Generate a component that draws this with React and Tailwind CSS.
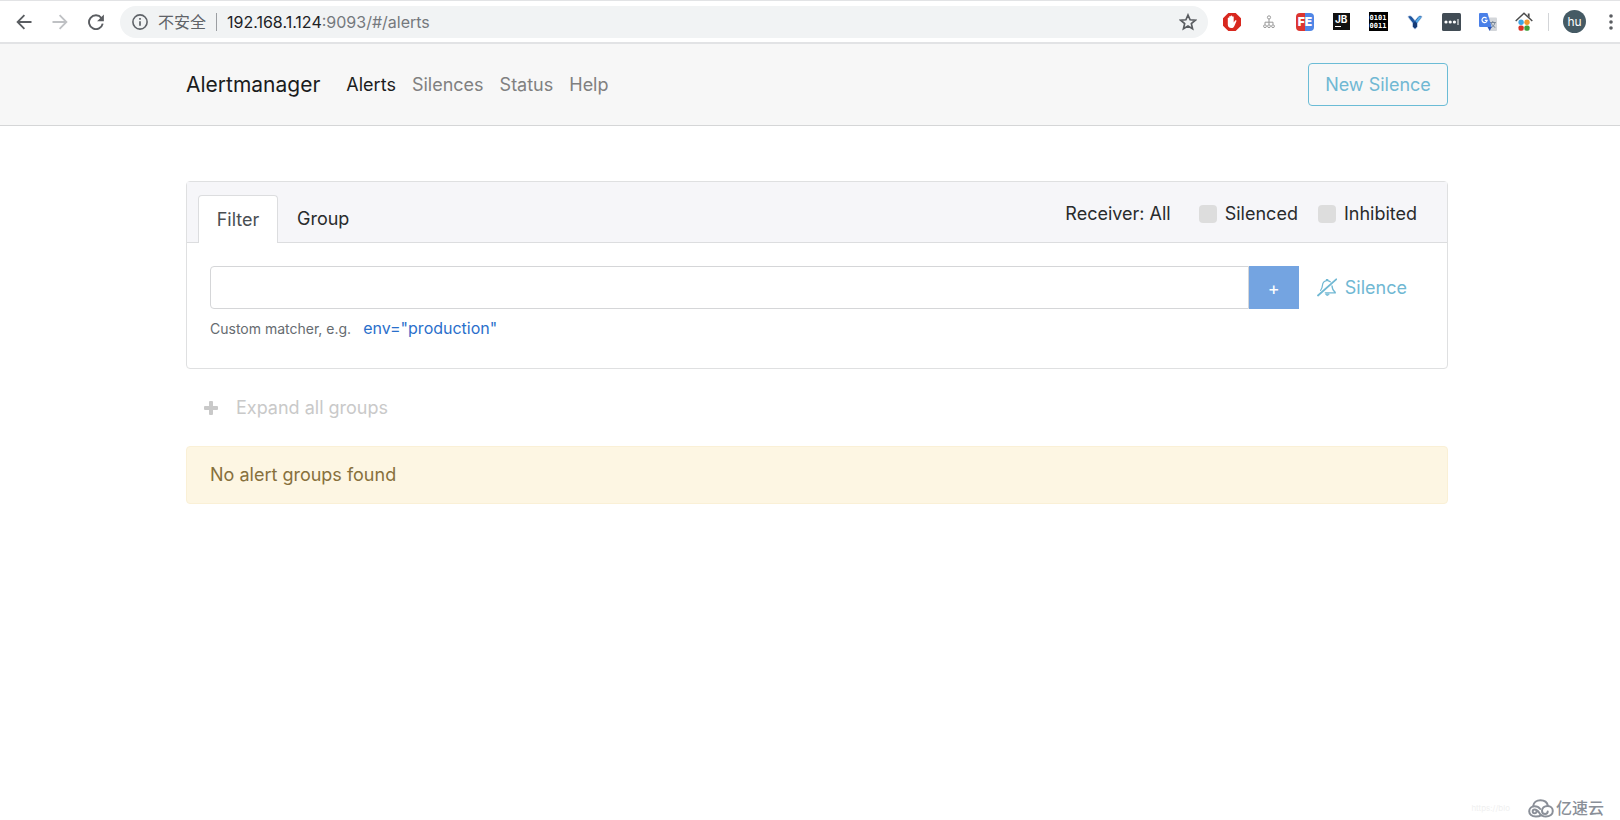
import React from "react";

const svgBase = { xmlns: "http://www.w3.org/2000/svg", "aria-hidden": true };

function ToolButton({ label, children }) {
  return (
    <button type="button" aria-label={label} className="flex h-6 w-6 shrink-0 items-center justify-center">
      {children}
    </button>
  );
}

function BackIcon({ className }) {
  return (
    <svg {...svgBase} viewBox="0 0 16 16" className={className} fill="none" stroke="currentColor" strokeWidth="1.8">
      <path d="M15.5 8H1.8M8.4 1.2 1.6 8l6.8 6.8" />
    </svg>
  );
}

function ReloadIcon() {
  return (
    <svg {...svgBase} viewBox="0 0 16 16" className="h-4 w-4 text-[#5a5d61]" fill="none">
      <path d="M13.4 4A6.9 6.9 0 1 0 14.7 9.6" stroke="currentColor" strokeWidth="1.9" />
      <path d="M15.9.4v6.8H9.1z" fill="currentColor" />
    </svg>
  );
}

function InfoIcon() {
  return (
    <svg {...svgBase} viewBox="0 0 16 16" className="h-4 w-4 shrink-0 text-[#5f6368]" fill="none">
      <circle cx="8" cy="8" r="7.1" stroke="currentColor" strokeWidth="1.6" />
      <path d="M8 7.2v4.5M8 4v1.8" stroke="currentColor" strokeWidth="1.7" />
    </svg>
  );
}

function StarIcon() {
  return (
    <svg {...svgBase} viewBox="0 0 18 18" className="h-[18px] w-[18px] text-[#5a5d61]" fill="none">
      <path
        d="m9 2 2.1 4.8 5.2.45-3.95 3.4 1.2 5.1L9 13.05l-4.55 2.7 1.2-5.1-3.95-3.4 5.2-.45z"
        stroke="currentColor"
        strokeWidth="1.7"
      />
    </svg>
  );
}

function BlockerIcon() {
  return (
    <svg {...svgBase} viewBox="0 0 18 18" className="h-[18px] w-[18px]">
      <path d="M5.3 0h7.4L18 5.3v7.4L12.7 18H5.3L0 12.7V5.3z" fill="#d8281f" />
      <path
        d="M4.800 9.500V5.100c0-.9 1.4-.9 1.4 0V3.700c0-.9 1.5-.9 1.5 0v-.6c0-.9 1.500-.9 1.500 0v.8c0-.9 1.500-.9 1.500 0v5.500l1.200-1.700c.7-.8 1.900-.4 1.500.6l-1.800 4.200c-.6 1.700-1.600 2.600-3.300 2.600-2.300 0-3.500-1.500-3.500-3.600z"
        fill="#fff"
      />
    </svg>
  );
}

function SitemapIcon() {
  return (
    <svg {...svgBase} viewBox="0 0 12 14" className="h-[14px] w-3" fill="none" stroke="#999999">
      <circle cx="6" cy="2.4" r="1.6" />
      <path d="M6 4v5.500M2 9.500V7.200h8v2.300" />
      <circle cx="2" cy="11.2" r="1.4" />
      <circle cx="6" cy="11.2" r="1.4" />
      <circle cx="10" cy="11.2" r="1.4" />
    </svg>
  );
}

function FeIcon() {
  return (
    <span className="flex h-[18px] w-[18px] items-center justify-center rounded-sm bg-linear-to-r from-[#dc3530] from-50% to-[#4f86e6] to-50% text-[12px] leading-none font-black text-white">
      FE
    </span>
  );
}

function JbIcon() {
  return (
    <span className="flex h-[17px] w-[17px] flex-col items-start gap-0.5 bg-[#111] px-0.5 pt-0.5 text-[10px] leading-[9px] font-bold text-white">
      JB
      <span className="h-px w-1.5 bg-white" />
    </span>
  );
}

function BinaryIcon() {
  return (
    <span className="flex h-[19px] w-[19px] flex-col items-center justify-center bg-black font-['DejaVu_Sans_Mono',monospace] text-[7px] leading-[8px] font-bold text-white">
      <span>0101</span>
      <span>0011</span>
    </span>
  );
}

function VIcon() {
  return (
    <svg {...svgBase} viewBox="0 0 16 18" className="h-[18px] w-4">
      <path
        d="M.8 3.800C1.800 2.500 3.600 2.300 4.800 3.600L8 7.400l3.200-3.800c1.200-1.300 3-1.100 4 .2L10.500 10v3.800L8 16.200l-2.500-2.400V10z"
        fill="#1f559f"
        stroke="#d5e0ee"
        strokeWidth=".7"
      />
      <path d="M8.600 8.200 11.600 4.300c.8-.9 2-.9 2.800-.2L10 9.900z" fill="#58aee8" />
      <path d="M6 10.400 8 8.800l2 1.600v3.200l-2 1.900-2-1.900z" fill="#153a75" />
    </svg>
  );
}

function DotsIcon() {
  return (
    <svg {...svgBase} viewBox="0 0 19 18" className="h-[18px] w-[19px]">
      <rect width="19" height="18" rx="1.5" fill="#414c55" />
      <g fill="#fff">
        <circle cx="4" cy="9" r="1.6" />
        <circle cx="8.2" cy="9" r="1.6" />
        <circle cx="12.4" cy="9" r="1.6" />
        <rect x="15.500" y="6" width="1" height="6" />
      </g>
    </svg>
  );
}

function TranslateIcon() {
  return (
    <svg {...svgBase} viewBox="0 0 18 18" className="h-[18px] w-[18px]">
      <path d="M8 4.500h9a1 1 0 0 1 1 1V17a1 1 0 0 1-1 1h-6z" fill="#d3d6da" />
      <path d="M10.800 9.500h6M13.800 8v1.500M16 9.500c-.5 2.500-2 4-4 5.200M12 9.700c.7 2 2 3.600 4.300 4.800" stroke="#6f7f92" strokeWidth=".9" fill="none" />
      <path d="M1 0h7.500l4.200 14H1a1 1 0 0 1-1-1V1a1 1 0 0 1 1-1z" fill="#4a80e8" />
      <path d="M8.500 14h4.200l-2 4z" fill="#2c56b8" />
      <path d="M7.600 5.300A2.600 2.600 0 1 0 8.200 7.300H5.800" stroke="#fff" strokeWidth="1.2" fill="none" />
    </svg>
  );
}

function HouseIcon() {
  return (
    <svg {...svgBase} viewBox="0 0 18 19" className="h-[19px] w-[18px]">
      <path d="M12.800 1.500h1.800v4l-1.800-1.500z" fill="#4b4b4b" />
      <path d="M.7 9 9 1.300 17.300 9" stroke="#4b4b4b" strokeWidth="1.5" fill="none" />
      <circle cx="6.1" cy="10.3" r="2.7" fill="#3fa4e4" />
      <circle cx="12" cy="10.3" r="2.7" fill="#f19a2c" />
      <rect x="3.5" y="13.5" width="5.2" height="5.2" rx="1.8" fill="#d93226" />
      <rect x="9.4" y="13.5" width="5.2" height="5.2" rx="1.8" fill="#3f9f3a" />
    </svg>
  );
}

function MoreIcon() {
  return (
    <svg {...svgBase} viewBox="0 0 4 16" className="h-4 w-1" fill="#5a5d61">
      <circle cx="2" cy="2" r="1.8" />
      <circle cx="2" cy="8" r="1.8" />
      <circle cx="2" cy="14" r="1.8" />
    </svg>
  );
}

function BellSlashIcon() {
  return (
    <svg {...svgBase} viewBox="0 0 20 19" className="h-[19px] w-5" fill="none" stroke="currentColor" strokeLinecap="round">
      <path d="M1 17.500 19.200 1.300" strokeWidth="1.8" />
      <path d="M3.600 12.300c1.300-1.400 1.700-3.100 1.900-5.200.2-2.400 1.800-4 4-4.500V1.500h1.200v1.100c1 .2 1.900.6 2.600 1.200" strokeWidth="1.2" />
      <path d="M15 7.800c.2 3.200 1 5 3.200 6.400v.6H8.300" strokeWidth="1.3" />
      <path d="M8.700 16.300c.6 1.700 2.700 1.700 3.300 0z" fill="currentColor" strokeWidth=".8" />
    </svg>
  );
}

function CloudLogo() {
  return (
    <svg {...svgBase} viewBox="0 0 26 19" className="h-[19px] w-[26px]" fill="none" stroke="#8a8f98" strokeWidth="2" strokeLinecap="round">
      <path d="M5.200 7.200C5.500 3.500 8.600 1.200 12.500 1.200c3.600 0 6.700 2.200 7.400 5.600" />
      <path d="M8.500 12.500a1.900 1.900 0 1 1-1.900-2c2.700 0 3.600 1.700 4.900 3.700 1.200 2 2.800 3.300 6.300 3.300 4.200 0 7-2.200 7-5.400 0-3-2.200-5.100-5.200-5.100-3.200 0-5.600 2-5.600 4.800 0 1.900 1.400 3.200 3.100 3.200 1.600 0 2.600-1 2.600-2.400" />
      <path d="M13 16.300c-1.200.8-2.900 1.200-5.200 1.200C3.800 17.500 1.200 15.400 1.200 12.300c0-3 2.400-5.100 5.400-5.100 2.500 0 4.300 1 5.600 2.800" />
    </svg>
  );
}

function BrowserBar() {
  return (
    <div className="flex h-11 items-center border-t border-b-2 border-[#e2e3e5] bg-white pr-[7px] pl-3">
      <div className="flex items-center gap-3">
        <ToolButton label="Back">
          <BackIcon className="h-4 w-4 text-[#5a5d61]" />
        </ToolButton>
        <ToolButton label="Forward">
          <BackIcon className="h-4 w-4 rotate-180 text-[#bfc1c4]" />
        </ToolButton>
        <ToolButton label="Reload">
          <ReloadIcon />
        </ToolButton>
      </div>
      <div className="ml-3 flex h-8 min-w-0 flex-1 items-center rounded-full bg-[#f1f3f4] pr-2 pl-3 text-[16px]">
        <InfoIcon />
        <span className="ml-2.5 text-[#5f6368]">不安全</span>
        <span className="mx-2.5 h-[18px] w-px bg-[#9b9ea2]" />
        <span className="flex-1 truncate text-[#75797d]">
          <span className="text-[#202124]">192.168.1.124</span>:9093/#/alerts
        </span>
        <ToolButton label="Bookmark">
          <StarIcon />
        </ToolButton>
      </div>
      <div className="ml-3 flex w-[316px] items-center justify-between">
        <ToolButton label="Blocker"><BlockerIcon /></ToolButton>
        <ToolButton label="Sitemap"><SitemapIcon /></ToolButton>
        <ToolButton label="FE helper"><FeIcon /></ToolButton>
        <ToolButton label="Toolbox"><JbIcon /></ToolButton>
        <ToolButton label="Binary"><BinaryIcon /></ToolButton>
        <ToolButton label="Vectors"><VIcon /></ToolButton>
        <ToolButton label="Passwords"><DotsIcon /></ToolButton>
        <ToolButton label="Translate"><TranslateIcon /></ToolButton>
        <ToolButton label="Home"><HouseIcon /></ToolButton>
      </div>
      <span className="mr-3.5 ml-3 h-[18px] w-px bg-[#d3d5d8]" />
      <button type="button" className="flex h-[23px] w-[23px] items-center justify-center rounded-full bg-[#455a64] text-[12px] leading-none text-white">
        hu
      </button>
      <button type="button" aria-label="More" className="ml-[23px] flex h-6 w-1 items-center">
        <MoreIcon />
      </button>
    </div>
  );
}

const links = ["Silences", "Status", "Help"];

function Header() {
  return (
    <header className="flex h-[82px] items-center border-b border-[#d5d6d7] bg-[#f7f7f7] pr-[172px] pl-[186px]">
      <a href="#/" className="text-[21px] text-[#1b1c1d]">Alertmanager</a>
      <nav className="ml-[26px] flex flex-1 items-center gap-4 text-[#808080]">
        <a href="#/alerts" className="text-[#1b1c1d]">Alerts</a>
        {links.map((l) => (
          <a key={l} href={"#/" + l.toLowerCase()}>{l}</a>
        ))}
      </nav>
      <button type="button" className="h-[43px] w-[140px] rounded-[4px] border border-[#6bbcd6] text-[#70b8d3]">
        New Silence
      </button>
    </header>
  );
}

function Check({ label }) {
  return (
    <label className="flex items-center gap-2">
      <input type="checkbox" className="h-[18px] w-[18px] appearance-none rounded-[4px] bg-[#dddddd]" />
      {label}
    </label>
  );
}

function FilterCard() {
  return (
    <section className="rounded-[4px] border border-[#dfe0e1]">
      <div className="flex h-[61px] items-end justify-between border-b border-[#dcdddf] bg-[#f6f6f9] pr-[30px] pl-[11px]">
        <div className="-mb-px flex text-[#292b2c]">
          <button type="button" className="h-12 w-[80px] rounded-t-[4px] border border-b-0 border-[#dcdddf] bg-white text-[#494e52]">
            Filter
          </button>
          <button type="button" className="h-12 px-[19px]">Group</button>
        </div>
        <div className="flex h-14 items-center text-[#292b2c]">
          <button type="button" className="mr-7">Receiver: All</button>
          <div className="flex gap-5">
            <Check label="Silenced" />
            <Check label="Inhibited" />
          </div>
        </div>
      </div>
      <div className="px-[23px] pt-[23px] pb-[25px]">
        <div className="flex items-center">
          <input aria-label="Matcher" className="h-[43px] min-w-0 flex-1 rounded-l-[4px] border border-[#d5d6d8] bg-white px-3 outline-none" />
          <button type="button" aria-label="Add matcher" className="h-[43px] w-[50px] bg-[#74a4e1] pt-0.5 text-white">+</button>
          <button type="button" className="mr-[17px] ml-[18px] flex items-center gap-2 text-[#70b8d3]">
            <BellSlashIcon />
            Silence
          </button>
        </div>
        <p className="mt-[5px] text-[14px] leading-7 text-[#666b70]">
          Custom matcher, e.g.
          <a href="#/alerts" className="ml-3 text-[16px] text-[#2a6fcb]">env="production"</a>
        </p>
      </div>
    </section>
  );
}

export default function App() {
  return (
    <div className="relative flex min-h-screen flex-col bg-white font-[Inter,'Noto_Sans_CJK_SC',sans-serif] text-[18px] leading-7">
      <BrowserBar />
      <Header />
      <main className="pt-[55px] pr-[172px] pl-[186px]">
        <FilterCard />
        <button type="button" className="mt-[25px] ml-[18px] flex items-center gap-[18px] text-[#c9c9c9]">
          <svg {...svgBase} viewBox="0 0 14 14" className="h-3.5 w-3.5" fill="currentColor">
            <path d="M6 0h2a1 1 0 0 1 1 1v4h4a1 1 0 0 1 1 1v2a1 1 0 0 1-1 1H9v4a1 1 0 0 1-1 1H6a1 1 0 0 1-1-1V9H1a1 1 0 0 1-1-1V6a1 1 0 0 1 1-1h4V1a1 1 0 0 1 1-1z" />
          </svg>
          Expand all groups
        </button>
        <div role="alert" className="mt-6 rounded-[4px] border border-[#faf0d6] bg-[#fdf6e3] px-[23px] py-3.5 text-[#87703c]">
          No alert groups found
        </div>
      </main>
      <div className="absolute right-4 bottom-0 flex items-center leading-6">
        <span className="mr-[18px] text-[8px] text-[#f0f0f0]">https://blo</span>
        <CloudLogo />
        <span className="ml-0.5 text-[16px] font-medium text-[#8a8f98]">亿速云</span>
      </div>
    </div>
  );
}
